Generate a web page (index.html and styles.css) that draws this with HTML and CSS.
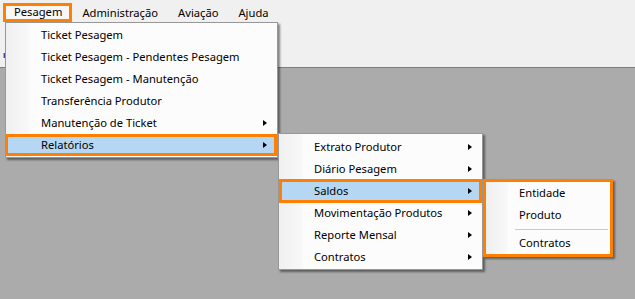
FILE: index.html
```html
<!DOCTYPE html>
<html lang="pt">
    <head>
        <meta charset="UTF-8" />
        <meta name="viewport" content="width=device-width, initial-scale=1.0" />
        <title>Pesagem</title>
        <link rel="stylesheet" href="styles.css">
    </head>
    <body>
        <header class="top">
            <nav class="menubar">
                <span class="bar-item open">Pesagem</span>
                <span class="bar-item">Administração</span>
                <span class="bar-item">Aviação</span>
                <span class="bar-item">Ajuda</span>
            </nav>
            <div class="toolbar">
                <span class="tool-bit"></span>
            </div>
        </header>
        <main class="desk"></main>

        <!-- menu aberto -->
        <div class="menu menu-main">
            <div class="row">Ticket Pesagem</div>
            <div class="row">Ticket Pesagem - Pendentes Pesagem</div>
            <div class="row">Ticket Pesagem - Manutenção</div>
            <div class="row">Transferência Produtor</div>
            <div class="row">Manutenção de Ticket<i class="arrow"></i></div>
            <div class="row sel sel-main">Relatórios<i class="arrow"></i></div>
        </div>

        <div class="menu menu-rel">
            <div class="row">Extrato Produtor<i class="arrow"></i></div>
            <div class="row">Diário Pesagem<i class="arrow"></i></div>
            <div class="row sel sel-sub">Saldos<i class="arrow"></i></div>
            <div class="row">Movimentação Produtos<i class="arrow"></i></div>
            <div class="row">Reporte Mensal<i class="arrow"></i></div>
            <div class="row">Contratos<i class="arrow"></i></div>
        </div>

        <div class="menu menu-saldos">
            <div class="row">Entidade</div>
            <div class="row">Produto</div>
            <div class="sep"></div>
            <div class="row">Contratos</div>
        </div>
    </body>
</html>
```
FILE: styles.css
```css
* {
    margin: 0;
    padding: 0;
    box-sizing: border-box;
}
html, body {
    width: 635px;
    height: 299px;
    overflow: hidden;
}
body {
    font-family: "Noto Sans", "Open Sans", sans-serif;
    font-size: 11.2px;
    color: #000;
    background: #ababab;
}
.top {
    height: 68px;
    background: #f0f0f0;
    border-bottom: 1px solid #7d7d7d;
}
.menubar {
    display: flex;
    height: 22px;
    padding: 3px 0 0 3px;
}
.bar-item {
    height: 19px;
    line-height: 19px;
    padding: 0 10px;
}
.bar-item.open {
    border: 3px solid #ff8000;
    background: #f7f7f7;
    line-height: 12px;
    padding: 0 7px 0 8px;
}
.toolbar {
    position: relative;
    height: 45px;
}
.tool-bit {
    position: absolute;
    left: 3px;
    top: 31px;
    width: 2px;
    height: 5px;
    background: #5b3a9c;
    border-left: 1px solid #e8a23a;
}

/* menus */
.menu {
    position: absolute;
    background: linear-gradient(to right, #f0f0f0, #f8f8f8 23px, #fcfcfc 24px);
    border: 1px solid #979797;
    box-shadow: 2px 2px 2px rgba(0, 0, 0, 0.45);
}
.menu-main {
    left: 5px;
    top: 22px;
    width: 273px;
    padding: 1px 2px 1px 2px;
}
.menu-rel {
    left: 278px;
    top: 133px;
    width: 205px;
    padding: 2px 2px 1px 2px;
}
.menu-saldos {
    left: 483px;
    top: 179px;
    width: 130px;
    border: 3px solid #ff8000;
    background: linear-gradient(to right, #f0f0f0, #f8f8f8 21px, #fcfcfc 22px);
}
.row {
    position: relative;
    display: flex;
    align-items: center;
    height: 22px;
    padding: 0 8px 1px 33px;
    white-space: nowrap;
}
.arrow {
    margin-left: auto;
    width: 0;
    height: 0;
    border-left: 4px solid #000;
    border-top: 3.5px solid transparent;
    border-bottom: 3.5px solid transparent;
}
.sel {
    background: #b5d7f3;
}
.sel::after {
    content: "";
    position: absolute;
    border: 3px solid #ff8000;
}
.sel-main::after {
    top: 0;
    bottom: 0;
    left: -3px;
    right: -2px;
}
.sel-sub::after {
    top: -1px;
    bottom: -1px;
    left: -2px;
    right: -2px;
}
.sep {
    height: 6px;
    margin: 0 2px 0 29px;
    border-top: 3px solid transparent;
    background: linear-gradient(#c9c9c9, #c9c9c9) top / 100% 1px no-repeat;
}
```
